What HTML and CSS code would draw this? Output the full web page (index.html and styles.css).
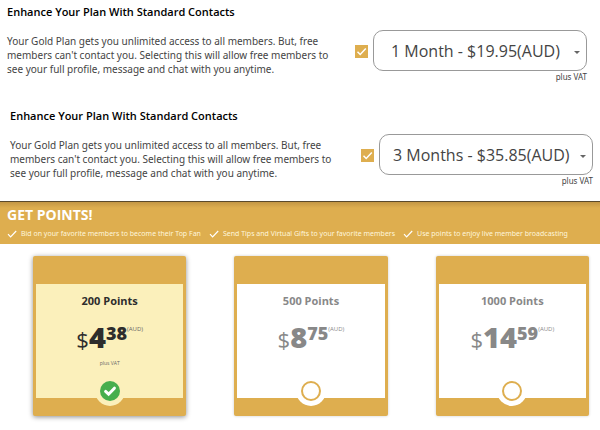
FILE: index.html
```html
<!DOCTYPE html>
<html lang="en">
<head>
  <meta charset="UTF-8">
  <meta name="viewport" content="width=device-width, initial-scale=1.0">
  <title>Upgrade Your Plan</title>
  <link rel="stylesheet" href="styles.css">
</head>
<body>
  <section class="plan">
    <h2>Enhance Your Plan With Standard Contacts</h2>
    <div class="plan-row">
      <label class="plan-text" for="plan1">Your Gold Plan gets you unlimited access to all members. But, free members can't contact you. Selecting this will allow free members to see your full profile, message and chat with you anytime.</label>
      <span class="tick">
        <input type="checkbox" id="plan1" checked>
        <svg viewBox="0 0 13 13"><path d="M2.5 6.8 5.2 9.5 10.8 3.6"/></svg>
      </span>
      <div class="plan-price">
        <div class="select-box">
          <select aria-label="Plan length">
            <option>1 Month - $19.95(AUD)</option>
          </select>
        </div>
        <small>plus VAT</small>
      </div>
    </div>
  </section>

  <section class="plan plan-long">
    <h2>Enhance Your Plan With Standard Contacts</h2>
    <div class="plan-row">
      <label class="plan-text" for="plan2">Your Gold Plan gets you unlimited access to all members. But, free members can't contact you. Selecting this will allow free members to see your full profile, message and chat with you anytime.</label>
      <span class="tick">
        <input type="checkbox" id="plan2" checked>
        <svg viewBox="0 0 13 13"><path d="M2.5 6.8 5.2 9.5 10.8 3.6"/></svg>
      </span>
      <div class="plan-price">
        <div class="select-box">
          <select aria-label="Plan length">
            <option>3 Months - $35.85(AUD)</option>
          </select>
        </div>
        <small>plus VAT</small>
      </div>
    </div>
  </section>

  <section class="banner">
    <h1>GET POINTS!</h1>
    <ul>
      <li><svg viewBox="0 0 10 8"><path d="M1 4.2 3.6 6.8 9.2 1"/></svg>Bid on your favorite members to become their Top Fan</li>
      <li><svg viewBox="0 0 10 8"><path d="M1 4.2 3.6 6.8 9.2 1"/></svg>Send Tips and Virtual Gifts to your favorite members</li>
      <li><svg viewBox="0 0 10 8"><path d="M1 4.2 3.6 6.8 9.2 1"/></svg>Use points to enjoy live member broadcasting</li>
    </ul>
  </section>

  <div class="cards">
    <label class="card selected">
      <span class="card-body">
        <span class="points">200 Points</span>
        <span class="price"><span class="currency">$</span><b>4</b><span class="cents">38</span><span class="code">(AUD)</span></span>
        <span class="vat">plus VAT</span>
      </span>
      <span class="pick">
        <input type="radio" name="points" checked>
        <svg viewBox="0 0 20 20"><path d="M5.6 10.4 8.6 13.2 14.4 7.2"/></svg>
      </span>
    </label>
    <label class="card">
      <span class="card-body">
        <span class="points">500 Points</span>
        <span class="price"><span class="currency">$</span><b>8</b><span class="cents">75</span><span class="code">(AUD)</span></span>
      </span>
      <span class="pick">
        <input type="radio" name="points">
      </span>
    </label>
    <label class="card">
      <span class="card-body">
        <span class="points">1000 Points</span>
        <span class="price"><span class="currency">$</span><b>14</b><span class="cents">59</span><span class="code">(AUD)</span></span>
      </span>
      <span class="pick">
        <input type="radio" name="points">
      </span>
    </label>
  </div>
</body>
</html>
```
FILE: styles.css
```css
* {
  box-sizing: border-box;
}
body {
  margin: 0;
  background: #fff;
  color: #444;
  font-family: "Open Sans", sans-serif;
}
h1, h2, ul {
  margin: 0;
  padding: 0;
}

/* plans */
.plan {
  padding: 4px 13px 0 7px;
}
.plan-long {
  margin-top: 21px;
  padding: 4px 7px 0 10px;
}
.plan h2 {
  margin-bottom: 10px;
  color: #000;
  font-size: 11px;
  font-weight: 600;
  line-height: 16px;
}
.plan-row {
  display: flex;
  align-items: flex-start;
}
.plan-text {
  flex: 1;
  padding: 4px 12px 0 0;
  font-family: "Noto Sans", sans-serif;
  font-size: 10px;
  line-height: 14px;
}
.tick {
  display: grid;
  width: 13px;
  height: 13px;
  margin: 15px 5px 0 0;
}
.tick input {
  grid-area: 1 / 1;
  appearance: none;
  width: 13px;
  height: 13px;
  margin: 0;
  background: #deae4f;
}
.tick svg {
  grid-area: 1 / 1;
  fill: none;
  stroke: #fff;
  stroke-width: 1.5;
  pointer-events: none;
}
.plan-price {
  width: 36%;
  min-width: 214px;
  text-align: right;
}
.select-box {
  position: relative;
}
.select-box::after {
  content: "";
  position: absolute;
  top: 21px;
  right: 7px;
  border: 3px solid transparent;
  border-top-color: #666;
  pointer-events: none;
}
.plan-price select {
  appearance: none;
  display: block;
  width: 100%;
  height: 41px;
  padding: 0 16px 0 17px;
  border: 1px solid #999;
  border-radius: 10px;
  background: #fff;
  color: #444;
  font-family: inherit;
  font-size: 16px;
}
.plan-long select {
  padding-left: 13px;
}
.plan-price small {
  display: block;
  font-family: "Noto Sans", sans-serif;
  font-size: 8px;
  line-height: 12px;
}

/* banner */
.banner {
  margin-top: 14px;
  padding: 4px 7px 4px;
  border-top: 1px solid #5b4a2c;
  background: linear-gradient(#c49745, #deae4f 6px);
  color: #fff;
}
.banner h1 {
  font-size: 14px;
  line-height: 18px;
}
.banner ul {
  display: flex;
  gap: 8px;
  margin-top: 4px;
  list-style: none;
}
.banner li {
  display: flex;
  align-items: center;
  color: #fff6dc;
  font-family: "Noto Sans", sans-serif;
  font-size: 7px;
  line-height: 12px;
  white-space: nowrap;
}
.banner svg {
  width: 10px;
  height: 8px;
  margin-right: 4px;
  fill: none;
  stroke: #fff;
  stroke-width: 1.2;
}

/* point cards */
.cards {
  display: grid;
  grid-template-columns: repeat(3, 1fr);
  gap: 48px;
  padding: 12px 11px 14px 33px;
}
.card {
  display: flex;
  flex-direction: column;
  align-items: center;
  padding: 28px 3px 0;
  border-radius: 2px;
  background: #deae4f;
  box-shadow: 0 0 3px rgba(0, 0, 0, 0.2);
  color: #888;
}
.card-body {
  display: flex;
  flex-direction: column;
  align-items: center;
  width: 100%;
  height: 114px;
  padding-top: 9px;
  background: #fff;
}
.points {
  font-size: 11px;
  font-weight: 700;
  line-height: 16px;
}
.price {
  display: flex;
  align-items: baseline;
  margin-top: 12px;
  line-height: 32px;
}
.currency {
  font-size: 22px;
}
.price b {
  font-size: 29px;
  font-weight: 800;
}
.cents {
  align-self: flex-start;
  font-size: 18px;
  font-weight: 800;
  line-height: 24px;
}
.code {
  align-self: flex-start;
  font-size: 6px;
  line-height: 16px;
}
.vat {
  margin-top: 2px;
  font-size: 5px;
  line-height: 12px;
}
.pick {
  display: grid;
  margin: -22px 0 10px;
  padding: 5px;
  border-radius: 50%;
  background: #fff;
}
.pick input {
  grid-area: 1 / 1;
  appearance: none;
  width: 20px;
  height: 20px;
  margin: 0;
  border: 2px solid #deae4f;
  border-radius: 50%;
}
.pick svg {
  grid-area: 1 / 1;
  width: 20px;
  height: 20px;
  fill: none;
  stroke: #fff;
  stroke-width: 3;
  stroke-linecap: round;
  pointer-events: none;
}
.selected {
  box-shadow: 0 1px 5px rgba(0, 0, 0, 0.45);
  color: #2d2d2d;
}
.selected .card-body,
.selected .pick {
  background: #fbf0bb;
}
.selected .pick input {
  border: 0;
  background: #47ae4d;
}
.selected .code,
.selected .vat {
  color: #666;
}
```
